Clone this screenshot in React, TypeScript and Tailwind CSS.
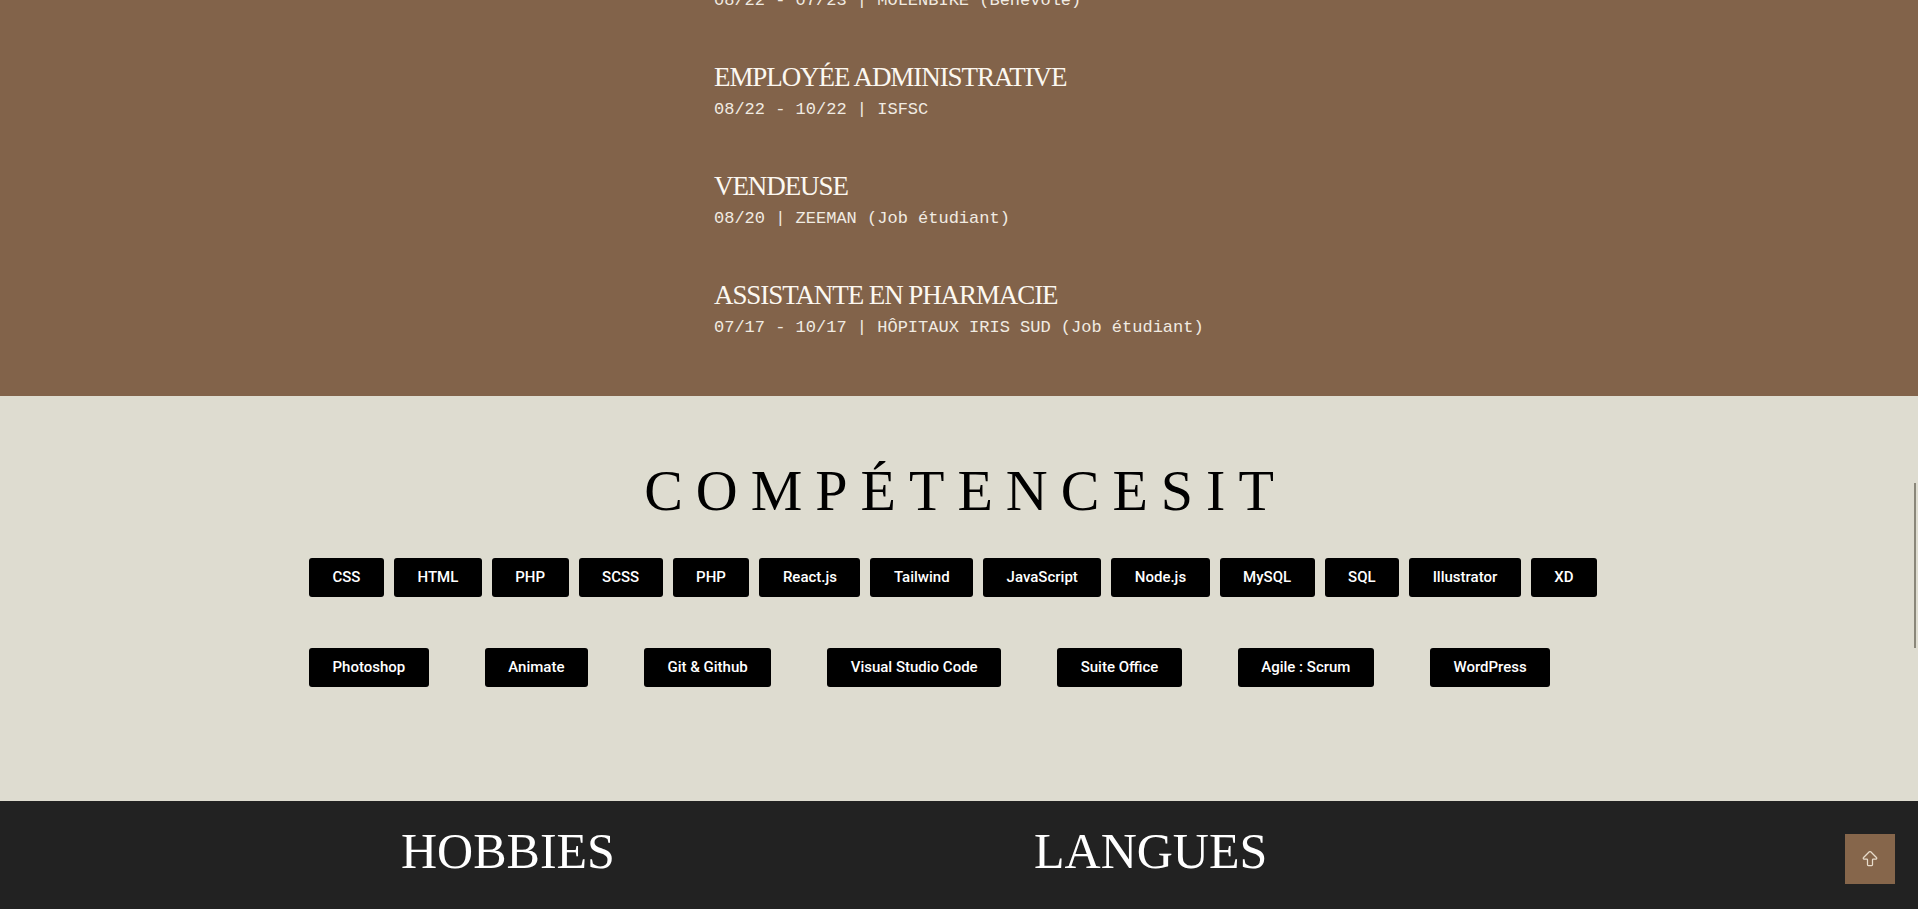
import { ArrowBigUp } from "lucide-react";

const experiences = [
  { title: "EMPLOYÉE ADMINISTRATIVE", meta: "08/22 - 10/22 | ISFSC" },
  { title: "VENDEUSE", meta: "08/20 | ZEEMAN (Job étudiant)" },
  { title: "ASSISTANTE EN PHARMACIE", meta: "07/17 - 10/17 | HÔPITAUX IRIS SUD (Job étudiant)" },
];

const skillsIt = ["CSS", "HTML", "PHP", "SCSS", "PHP", "React.js", "Tailwind", "JavaScript", "Node.js", "MySQL", "SQL", "Illustrator", "XD"];
const tools = ["Photoshop", "Animate", "Git & Github", "Visual Studio Code", "Suite Office", "Agile : Scrum", "WordPress"];

const Tag = ({ label }: { label: string }) => (
  <span className="flex h-[39px] items-center rounded-[3px] bg-black px-[23.5px] font-['Roboto',sans-serif] text-[15px] font-medium text-white">
    {label}
  </span>
);

const App = () => {
  return (
    <div className="min-h-screen bg-[#222222]">
      {/* Expériences */}
      <section className="bg-[#82634a] pb-[60px]">
        <div className="mx-auto w-[490px]">
          <p className="-mt-[8px] font-['Liberation_Mono',monospace] text-[17px] leading-none text-[#f1ebe2]">
            08/22 - 07/23 | MOLENBIKE (Bénévole)
          </p>
          {experiences.map((exp) => (
            <div key={exp.title} className="mt-[55px]">
              <h3 className="font-['Liberation_Serif',serif] text-[27px] leading-none tracking-[-0.04em] text-[#fcf8f1]">
                {exp.title}
              </h3>
              <p className="mt-[10px] font-['Liberation_Mono',monospace] text-[17px] leading-none text-[#f1ebe2]">
                {exp.meta}
              </p>
            </div>
          ))}
        </div>
      </section>

      {/* Compétences */}
      <section className="bg-[#dedcd0] pt-[66px] pb-[114px]">
        <h2 className="pl-[13px] text-center font-['Liberation_Serif',serif] text-[58px] leading-none tracking-[13px] text-black">
          COMPÉTENCES<span>IT</span>
        </h2>
        <div className="mx-auto mt-[38px] w-[1300px]">
          <div className="flex gap-[10px]">
            {skillsIt.map((s, i) => (
              <Tag key={i} label={s} />
            ))}
          </div>
          <div className="mt-[51px] flex gap-[56px]">
            {tools.map((s) => (
              <Tag key={s} label={s} />
            ))}
          </div>
        </div>
      </section>

      {/* Hobbies / Langues */}
      <section className="bg-[#222222] pt-[25px] pb-40">
        <div className="flex pl-[401px] font-['Liberation_Serif',serif] text-[50px] leading-none text-white">
          <h2 className="w-[633px]">HOBBIES</h2>
          <h2>LANGUES</h2>
        </div>
      </section>

      {/* scrollbar thumb */}
      <div className="fixed top-[483px] right-[2px] h-[165px] w-[2px] bg-[#8a877a]" />

      <button className="fixed right-[23px] bottom-[25px] flex h-[50px] w-[50px] items-center justify-center bg-[#86664b] text-[#e8dccb]">
        <ArrowBigUp className="h-5 w-5" strokeWidth={1.5} />
      </button>
    </div>
  );
};

export default App;
